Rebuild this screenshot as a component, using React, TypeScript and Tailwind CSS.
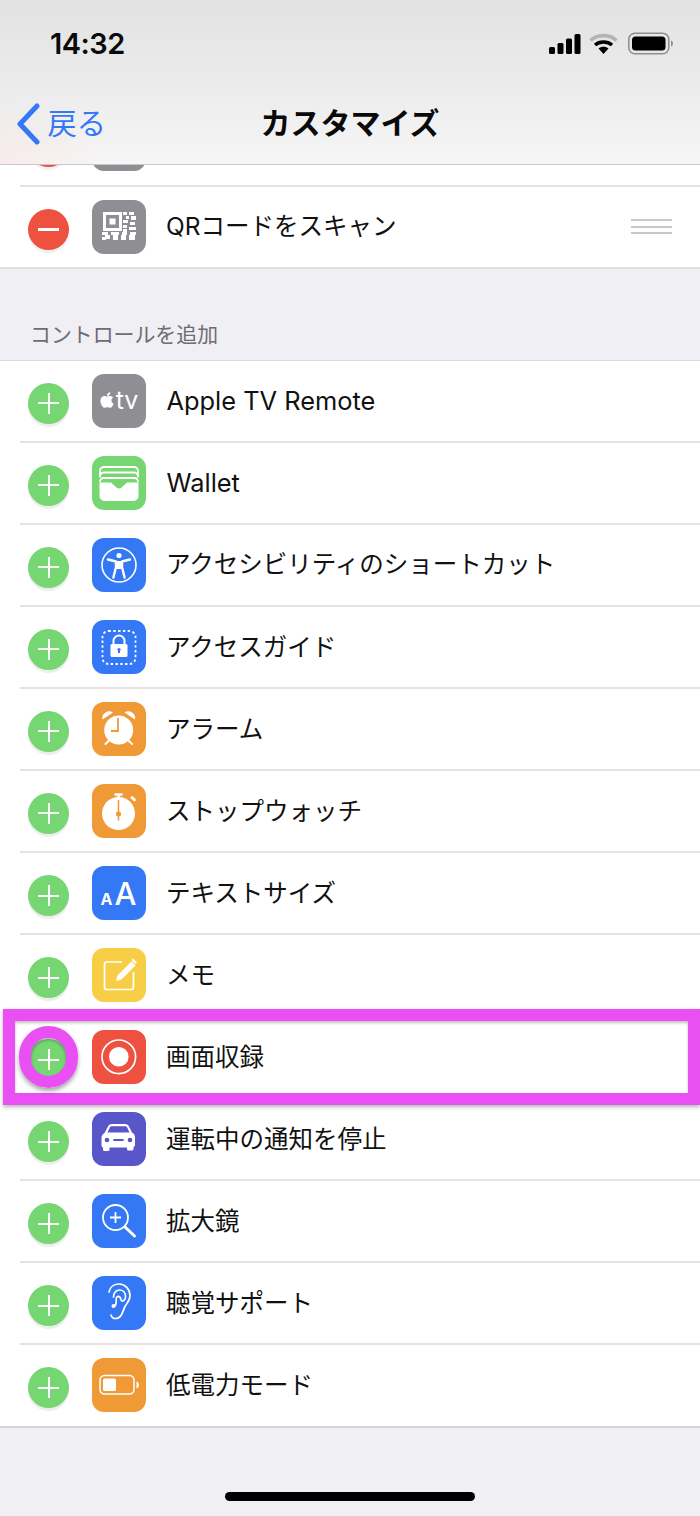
import React from "react";
import { FaApple } from "react-icons/fa";

const JP = "font-['Inter','Noto_Sans_CJK_JP',sans-serif]";

function Box({ children }: { children: React.ReactNode }) {
  return (
    <svg viewBox="0 0 54 54" className="absolute inset-0 h-[54px] w-[54px]" fill="none">
      {children}
    </svg>
  );
}

function Tile({ color, children }: { color: string; children: React.ReactNode }) {
  return (
    <div className={`relative h-[54px] w-[54px] shrink-0 overflow-hidden rounded-[12px] ${color}`}>
      {children}
    </div>
  );
}

function QrIcon() {
  return (
    <Box>
      <path d="M11 12h19v19H11z" fill="#fff" />
      <path d="M14 15h13v13H14z" fill="#8e8e93" />
      <path d="M17.500 18.500h6v6h-6z" fill="#fff" />
      <path d="M31 12h4v3h-4zM37 12h5v3h-5zM34 16h3v3h-3zM39 16h5v4h-5zM31 20h5v3h-5zM38 22h5v3h-5zM31 25h4v3h-4zM37 27h7v3h-7zM31 29h4v3h-4z" fill="#fff" />
      <path d="M10 32h6v3h-6zM19 32h8v3h-8zM30 32h5v3h-5zM38 32h6v3h-6zM13 35h5v4h-5zM21 35h5v5h-5zM29 35h5v5h-5zM37 35h6v5h-6zM10 37h4v3h-4z" fill="#fff" />
    </Box>
  );
}

function TvIcon() {
  return (
    <div className="flex h-full items-center justify-center gap-[1px] pb-[1px] text-white">
      <FaApple className="h-[18px] w-[16px]" />
      <span className="font-['Inter',sans-serif] text-[25px] leading-none font-normal">tv</span>
    </div>
  );
}

function WalletIcon() {
  return (
    <Box>
      <path d="M8 20v-5a4 4 0 0 1 4-4h30a4 4 0 0 1 4 4v5" stroke="#fff" strokeWidth="1.800" />
      <path d="M8 21.500v-1a4 4 0 0 1 4-4h30a4 4 0 0 1 4 4v1" stroke="#fff" strokeWidth="1.800" />
      <path d="M8 26v-.5a3.500 3.500 0 0 1 3.500-3.500h31a3.500 3.500 0 0 1 3.500 3.500v.5" stroke="#fff" strokeWidth="1.800" />
      <path d="M7.500 26.500H19l5.500 5c1.500 1.300 3.500 1.300 5 0l5.500-5h11.500V40a5 5 0 0 1-5 5h-29a5 5 0 0 1-5-5z" fill="#fff" />
    </Box>
  );
}

function AccessIcon() {
  return (
    <Box>
      <circle cx="27" cy="27" r="17" stroke="#fff" strokeWidth="1.600" />
      <circle cx="27" cy="17.500" r="2.600" fill="#fff" />
      <path d="M16 21.500l8 2v5.500l-2.600 10.500M38 21.500l-8 2v5.500l2.600 10.500" stroke="#fff" strokeWidth="2.400" strokeLinecap="round" strokeLinejoin="round" />
      <path d="M24 23h6v8h-6z" fill="#fff" />
    </Box>
  );
}

function GuidedIcon() {
  return (
    <Box>
      <rect x="10.500" y="11" width="33" height="33" rx="6" stroke="#fff" strokeWidth="1.800" strokeDasharray="2.400 2.400" />
      <path d="M21.500 25v-4a5.500 5.500 0 0 1 11 0v4" stroke="#fff" strokeWidth="2" />
      <rect x="18.500" y="24" width="17" height="13" rx="1.500" fill="#fff" />
      <path d="M27 29v4" stroke="#3478f6" strokeWidth="2" />
      <circle cx="27" cy="29.500" r="1.600" fill="#3478f6" />
    </Box>
  );
}

function AlarmIcon() {
  return (
    <Box>
      <circle cx="26.700" cy="28" r="14.500" fill="#fff" />
      <path d="M10.500 17.500a6.800 6.800 0 0 1 10.500-7zM43 17.500a6.800 6.800 0 0 0-10.500-7z" fill="#fff" />
      <path d="M13.500 42l3.500-3.500M40 42l-3.500-3.500" stroke="#fff" strokeWidth="2" strokeLinecap="round" />
      <path d="M26 16v13h-7" stroke="#f09a37" strokeWidth="1.800" />
    </Box>
  );
}

function StopwatchIcon() {
  return (
    <Box>
      <circle cx="26.500" cy="29.500" r="16.500" fill="#fff" />
      <path d="M23.500 10.500h6" stroke="#fff" strokeWidth="2.400" strokeLinecap="round" />
      <path d="M26.500 10v4" stroke="#fff" strokeWidth="2.400" />
      <path d="M40 13.500l2.500 2.500" stroke="#fff" strokeWidth="2.800" strokeLinecap="round" />
      <path d="M26.500 16v15" stroke="#f09a37" strokeWidth="1.500" />
      <circle cx="26.500" cy="30" r="2.600" fill="#f09a37" />
      <path d="M26.500 36.500v-4" stroke="#f09a37" strokeWidth="1.500" />
    </Box>
  );
}

function TextSizeIcon() {
  return (
    <div className="flex h-full items-end justify-center gap-[2px] pb-[15px] font-['Inter',sans-serif] leading-none text-white">
      <span className="text-[16px] leading-[12px] font-bold">A</span>
      <span className="text-[31px] leading-[23px] font-medium">A</span>
    </div>
  );
}

function MemoIcon() {
  return (
    <Box>
      <path d="M30 14H15a2.500 2.500 0 0 0-2.500 2.500V39a2.500 2.500 0 0 0 2.500 2.500h24a2.500 2.500 0 0 0 2.500-2.500V24" stroke="#fff" strokeWidth="1.700" />
      <path d="M24 33l1.500-5.500L39.500 13.500l4 4L29.500 31.500z" fill="#fff" />
      <path d="M41 10.500l4 4-1.500 1.500-4-4z" fill="#fff" />
    </Box>
  );
}

function RecordIcon() {
  return (
    <Box>
      <circle cx="26.800" cy="26.800" r="16.800" stroke="#fff" strokeWidth="1.700" />
      <circle cx="26.800" cy="26.800" r="9.800" fill="#fff" />
    </Box>
  );
}

function CarIcon() {
  return (
    <Box>
      <path
        fillRule="evenodd"
        d="M16 14.500c.8-1.800 2.500-2.500 4.500-2.500h12c2 0 3.700.7 4.500 2.500l3 6c2 1 3 2.800 3 5v7.500a2 2 0 0 1-1.500 2v2a1.500 1.500 0 0 1-1.500 1.500h-3.500a1.500 1.500 0 0 1-1.500-1.500V35.500H17.500V37.500a1.500 1.500 0 0 1-1.500 1.500h-3.500a1.500 1.500 0 0 1-1.500-1.500v-2a2 2 0 0 1-1.500-2V26c0-2.200 1-4 3-5zM15.500 20.500h22l-2.300-5c-.4-.9-1.200-1.300-2.200-1.300H20c-1 0-1.800.4-2.200 1.300z"
        fill="#fff"
      />
      <circle cx="15" cy="28" r="2.300" fill="#5856c9" />
      <circle cx="38" cy="28" r="2.300" fill="#5856c9" />
      <path d="M22 28h9" stroke="#5856c9" strokeWidth="1.800" strokeLinecap="round" />
    </Box>
  );
}

function MagnifierIcon() {
  return (
    <Box>
      <circle cx="23.500" cy="23.500" r="12.500" stroke="#fff" strokeWidth="1.800" />
      <path d="M18 23.500h11M23.500 18v11" stroke="#fff" strokeWidth="1.800" />
      <path d="M33 33l9.500 9" stroke="#fff" strokeWidth="3" strokeLinecap="round" />
    </Box>
  );
}

function EarIcon() {
  return (
    <Box>
      <path
        d="M17 16c1-5 5-8 10-8 6 0 11 5 11 11.500 0 5-3 7.500-5 11-1.500 3-2 6-4 9-1.500 2.500-3.500 3-5.500 3-2 0-4-1.500-4.500-3.500"
        stroke="#fff"
        strokeWidth="1.700"
        strokeLinecap="round"
      />
      <path
        d="M21.500 21c0-4 2.500-7 6-7s6 2.800 6 6.500c0 3-2 5-3.500 4.500-1.500-.5-.8-2.800-2.300-4-1.700-1.300-3.500-.3-3.500 2 0 2.500.3 4-.7 6.500"
        stroke="#fff"
        strokeWidth="1.700"
        strokeLinecap="round"
      />
      <circle cx="21.500" cy="30" r="2" fill="#fff" />
    </Box>
  );
}

function BatteryIcon() {
  return (
    <Box>
      <rect x="8" y="17.500" width="34" height="18.500" rx="4.500" stroke="#fff" strokeWidth="1.500" />
      <rect x="11" y="20.500" width="13" height="12.500" rx="1.500" fill="#fff" />
      <path d="M44.500 23.500c1.500.5 2.500 2 2.500 3.500s-1 3-2.500 3.500z" fill="#fff" />
    </Box>
  );
}

function AddBtn() {
  return (
    <div className="relative mt-[5px] h-[41px] w-[41px] shrink-0 rounded-full bg-[#76d672] shadow-[0_3px_1px_rgba(0,0,0,0.07)]">
      <span className="absolute top-[19.500px] left-[10px] h-[2px] w-[21px] bg-white" />
      <span className="absolute top-[10px] left-[19.500px] h-[21px] w-[2px] bg-white" />
    </div>
  );
}

function Row({ label, tile, latin }: { label: string; tile: React.ReactNode; latin?: boolean }) {
  return (
    <div className="ml-[20px] flex h-[82.080px] items-center border-b-2 border-[#e3e3e6] pr-[28px] last:ml-0 last:border-[#d6d6da] last:pl-[20px]">
      <div className="ml-[8px] flex w-[63.500px] shrink-0 items-center">
        <AddBtn />
      </div>
      {tile}
      <div className={`flex-1 leading-none text-[#111] ${latin ? "ml-[21px] text-[25.400px]" : "ml-[20.500px] text-[24.500px]"}`}>{label}</div>
    </div>
  );
}

function RemoveBtn({ className = "" }: { className?: string }) {
  return (
    <div className={`relative flex h-[41px] w-[41px] shrink-0 items-center justify-center rounded-full bg-[#ee5140] shadow-[0_3px_1px_rgba(0,0,0,0.06)] ${className}`}>
      <span className="h-[3px] w-[21px] bg-white" />
    </div>
  );
}

const rows: [string, string, React.ReactNode, boolean][] = [
  ["Apple TV Remote", "bg-[#8e8e93]", <TvIcon />, true],
  ["Wallet", "bg-[#76d672]", <WalletIcon />, true],
  ["アクセシビリティのショートカット", "bg-[#3478f6]", <AccessIcon />, false],
  ["アクセスガイド", "bg-[#3478f6]", <GuidedIcon />, false],
  ["アラーム", "bg-[#f09a37]", <AlarmIcon />, false],
  ["ストップウォッチ", "bg-[#f09a37]", <StopwatchIcon />, false],
  ["テキストサイズ", "bg-[#3478f6]", <TextSizeIcon />, false],
  ["メモ", "bg-[#f7ce46]", <MemoIcon />, false],
  ["画面収録", "bg-[#ee5140]", <RecordIcon />, false],
  ["運転中の通知を停止", "bg-[#5856c9]", <CarIcon />, false],
  ["拡大鏡", "bg-[#3478f6]", <MagnifierIcon />, false],
  ["聴覚サポート", "bg-[#3478f6]", <EarIcon />, false],
  ["低電力モード", "bg-[#f09a37]", <BatteryIcon />, false],
];

export default function App() {
  return (
    <div className={`relative flex h-[1516px] w-[700px] flex-col overflow-hidden bg-[#efeff4] ${JP}`}>
      {/* Header */}
      <header className="h-[165px] shrink-0 border-b border-[#c8c8cb] bg-[radial-gradient(ellipse_110px_70px_at_0%_100%,rgba(255,110,90,0.07),transparent),linear-gradient(to_bottom,#e2e2e3,#ebebeb_50%,#f7f6f6)] px-[16px]">
        <div className="flex h-[84px] items-center justify-between pt-[3px] pr-[11px] pl-[34px]">
          <span className="font-['Inter',sans-serif] text-[29px] leading-none font-semibold tracking-[-0.5px] text-[#0a0a0a]">14:32</span>
          <svg width="124" height="24" viewBox="0 0 124 24" fill="none">
            <rect x="0" y="15" width="6" height="7" rx="1.500" fill="#000" />
            <rect x="8.500" y="11" width="6" height="11" rx="1.500" fill="#000" />
            <rect x="17" y="6.500" width="6" height="15.500" rx="1.500" fill="#000" />
            <rect x="25.500" y="2" width="6" height="20" rx="1.500" fill="#000" />
            <path d="M41.500 8.500c7-6.500 19-6.500 26 0" stroke="#b4b4b5" strokeWidth="3.600" />
            <path d="M46 13c4.500-4 12.500-4 17 0" stroke="#000" strokeWidth="3.400" />
            <path d="M54.500 22l-5-5.500c2.500-2.300 7.500-2.300 10 0z" fill="#000" />
            <rect x="79.800" y="1.300" width="40" height="20.400" rx="6" stroke="#8e8e8e" strokeWidth="1.500" />
            <rect x="83" y="4.500" width="33.500" height="14" rx="3.500" fill="#000" />
            <path d="M122 8.500c1.300.5 2 1.700 2 3s-.7 2.500-2 3z" fill="#8e8e8e" />
          </svg>
        </div>
        <div className="relative flex h-[80px] items-center justify-center pb-[2px]">
          <div className="absolute top-[19px] left-0 flex items-center gap-[7.500px] text-[#3478f6]">
            <svg width="24" height="42" viewBox="0 0 24 42" fill="none">
              <path d="M21 3L4 21l17 18" stroke="#3478f6" strokeWidth="5" strokeLinecap="round" strokeLinejoin="round" />
            </svg>
            <span className="text-[29.300px] leading-none">戻る</span>
          </div>
          <h1 className="text-[30px] leading-none font-bold text-[#0a0a0a]">カスタマイズ</h1>
        </div>
      </header>

      {/* Active list */}
      <section className="shrink-0 border-b-2 border-[#e0e0e4] bg-white">
        <div className="ml-[20px] flex h-[21.500px] items-end overflow-hidden border-b-2 border-[#e3e3e6] pl-[8px]">
          <RemoveBtn className="mb-[17.500px]" />
          <div className="mb-[13.500px] ml-[22.500px] h-[54px] w-[54px] shrink-0 rounded-[12px] bg-[#8e8e93]" />
        </div>
        <div className="ml-[20px] flex h-[80px] items-center pr-[28px]">
          <div className="ml-[8px] flex w-[63.500px] shrink-0 items-center">
            <RemoveBtn className="mt-[5px]" />
          </div>
          <Tile color="bg-[#8e8e93]">
            <QrIcon />
          </Tile>
          <div className="ml-[20.500px] flex-1 text-[24.500px] leading-none text-[#111]">QRコードをスキャン</div>
          <div className="flex w-[41px] flex-col gap-[4.500px]">
            <span className="h-[2px] bg-[#c7c7cc]" />
            <span className="h-[2px] bg-[#c7c7cc]" />
            <span className="h-[2px] bg-[#c7c7cc]" />
          </div>
        </div>
      </section>

      {/* Section heading */}
      <div className="flex h-[91px] shrink-0 items-end pb-[13.500px] pl-[30px] text-[20.900px] leading-none text-[#6d6d72]">コントロールを追加</div>

      {/* Add list */}
      <section className="shrink-0 border-t border-[#dcdce0] bg-white">
        {rows.map(([label, color, icon, latin]) => (
          <Row key={label} label={label} latin={latin} tile={<Tile color={color}>{icon}</Tile>} />
        ))}
      </section>

      <div className="flex flex-1 justify-center pt-[64.500px]">
        <div className="h-[9px] w-[250px] rounded-full bg-black" />
      </div>

      {/* Annotation overlays */}
      <div className="absolute top-[1009px] left-[3px] h-[96px] w-[697px] border-[12px] border-[#ea4ff3] shadow-[0_2px_4px_rgba(0,0,0,0.3),inset_0_2px_3px_rgba(0,0,0,0.25)]" />
      <div className="absolute top-[1026px] left-[19px] h-[62px] w-[59px] rounded-full border-[12px] border-[#ea4ff3] shadow-[0_3px_4px_rgba(0,0,0,0.35),inset_0_2px_3px_rgba(0,0,0,0.3)]" />
    </div>
  );
}
